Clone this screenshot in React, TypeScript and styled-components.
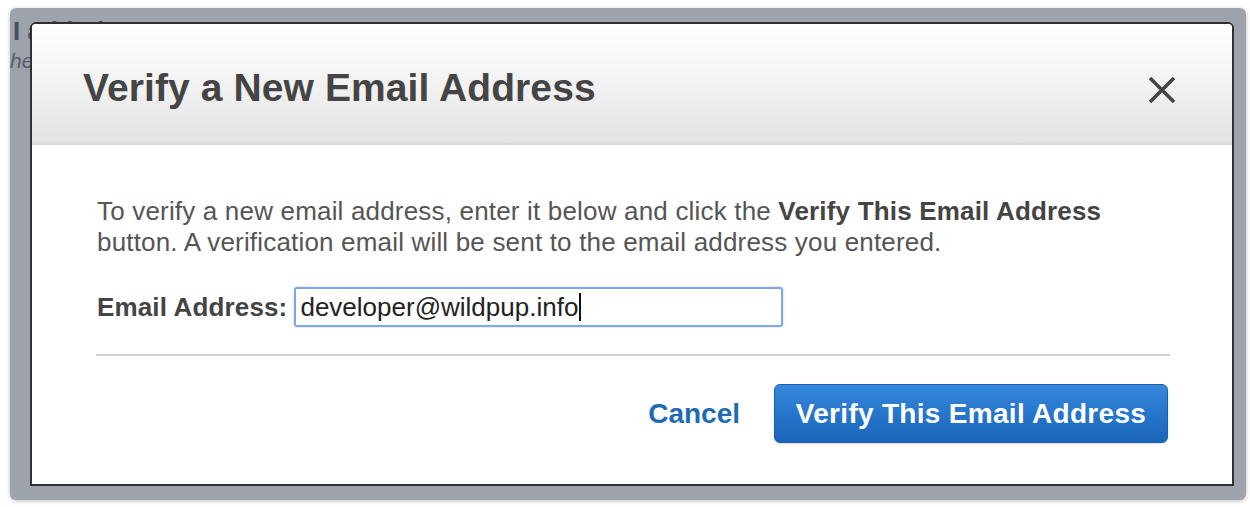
import React from "react";
import styled, { createGlobalStyle } from "styled-components";

const Global = createGlobalStyle`
  html, body { margin: 0; padding: 0; background: #ffffff; }
  body { font-family: "Liberation Sans", Arial, sans-serif; }
  * { box-sizing: border-box; }
`;

const Page = styled.div`
  width: 1250px;
  height: 507px;
  padding: 8px 4px 7px 10px;
  background: #ffffff;
`;

const Frame = styled.div`
  position: relative;
  width: 1236px;
  height: 492px;
  border-radius: 6px;
  background: #9da3aa;
  box-shadow: 0 1px 4px rgba(0, 0, 0, 0.25);
  overflow: hidden;
  padding: 7px 0 0 3px;
`;

const BackTitle = styled.div`
  font-size: 26px;
  font-weight: bold;
  color: #4a4e5c;
  line-height: 32px;
  white-space: nowrap;
`;

const BackSub = styled.div`
  font-size: 21px;
  font-style: italic;
  color: #565c6c;
  line-height: 28px;
  margin-left: -3px;
  white-space: nowrap;
`;

const Modal = styled.div`
  position: absolute;
  left: 20px;
  top: 14px;
  width: 1204px;
  height: 464px;
  border: 2px solid #2f3033;
  border-radius: 6px 6px 0 0;
  background: #ffffff;
  display: flex;
  flex-direction: column;
  overflow: hidden;
`;

const Header = styled.div`
  height: 121px;
  flex: none;
  display: flex;
  align-items: center;
  justify-content: space-between;
  padding: 8px 54px 0 51px;
  background: linear-gradient(to bottom, #ffffff 0%, #f1f1f1 55%, #e2e2e2 100%);
  border-bottom: 2px solid #d9d9d9;
`;

const Title = styled.h1`
  margin: 0;
  font-size: 39px;
  font-weight: bold;
  color: #444444;
  letter-spacing: 0.1px;
`;

const CloseButton = styled.button`
  width: 32px;
  height: 32px;
  padding: 0;
  margin-top: 4px;
  border: none;
  background: transparent;
  display: flex;
  align-items: center;
  justify-content: center;
  cursor: pointer;
`;

const Body = styled.div`
  flex: 1;
  display: flex;
  flex-direction: column;
  padding: 51px 62px 0 65px;
`;

const Intro = styled.p`
  margin: 0;
  font-size: 26px;
  line-height: 31px;
  color: #555555;
  letter-spacing: 0.18px;
  b { font-weight: bold; color: #444444; }
`;

const FieldRow = styled.div`
  display: flex;
  align-items: center;
  margin-top: 29px;
  gap: 7px;
`;

const Label = styled.label`
  font-size: 26px;
  font-weight: bold;
  color: #444444;
  letter-spacing: 0.15px;
`;

const InputBox = styled.div`
  width: 489px;
  height: 40px;
  border: 2px solid #7fa8e2;
  border-radius: 3px;
  box-shadow: 0 0 2px rgba(90, 140, 220, 0.5);
  display: flex;
  align-items: center;
  padding-left: 4px;
  font-size: 26px;
  color: #222222;
`;

const Caret = styled.span`
  display: inline-block;
  width: 2px;
  height: 28px;
  background: #111111;
  margin-left: 1px;
`;

const Divider = styled.hr`
  margin: 27px 0 0 -1px;
  border: none;
  border-top: 2px solid #d0d0d0;
  height: 0;
`;

const Footer = styled.div`
  display: flex;
  justify-content: flex-end;
  align-items: center;
  gap: 34px;
  margin-top: 28px;
  padding-right: 2px;
`;

const CancelLink = styled.a`
  font-size: 28px;
  font-weight: bold;
  color: #1f6bb2;
  text-decoration: none;
  cursor: pointer;
`;

const PrimaryButton = styled.button`
  width: 394px;
  height: 59px;
  border: 1px solid #1c5ea8;
  border-radius: 6px;
  background: linear-gradient(to bottom, #3688dc 0%, #2676cc 50%, #1a64b9 100%);
  color: #ffffff;
  font-family: "Liberation Sans", Arial, sans-serif;
  font-size: 28px;
  font-weight: bold;
  letter-spacing: 0.3px;
  padding: 0;
  cursor: pointer;
  box-shadow: 0 1px 2px rgba(0, 0, 0, 0.15);
`;

export default function App() {
  return (
    <>
      <Global />
      <Page>
        <Frame>
          <BackTitle>I added</BackTitle>
          <BackSub>he</BackSub>
          <Modal>
            <Header>
              <Title>Verify a New Email Address</Title>
              <CloseButton aria-label="Close">
                <svg width="28" height="28" viewBox="0 0 28 28">
                  <path d="M2 2 L26 26 M26 2 L2 26" stroke="#444" strokeWidth="3.6" strokeLinecap="butt" />
                </svg>
              </CloseButton>
            </Header>
            <Body>
              <Intro>
                To verify a new email address, enter it below and click the <b>Verify This Email Address</b>{" "}
                button. A verification email will be sent to the email address you entered.
              </Intro>
              <FieldRow>
                <Label>Email Address:</Label>
                <InputBox>
                  developer@wildpup.info
                  <Caret />
                </InputBox>
              </FieldRow>
              <Divider />
              <Footer>
                <CancelLink>Cancel</CancelLink>
                <PrimaryButton>Verify This Email Address</PrimaryButton>
              </Footer>
            </Body>
          </Modal>
        </Frame>
      </Page>
    </>
  );
}
